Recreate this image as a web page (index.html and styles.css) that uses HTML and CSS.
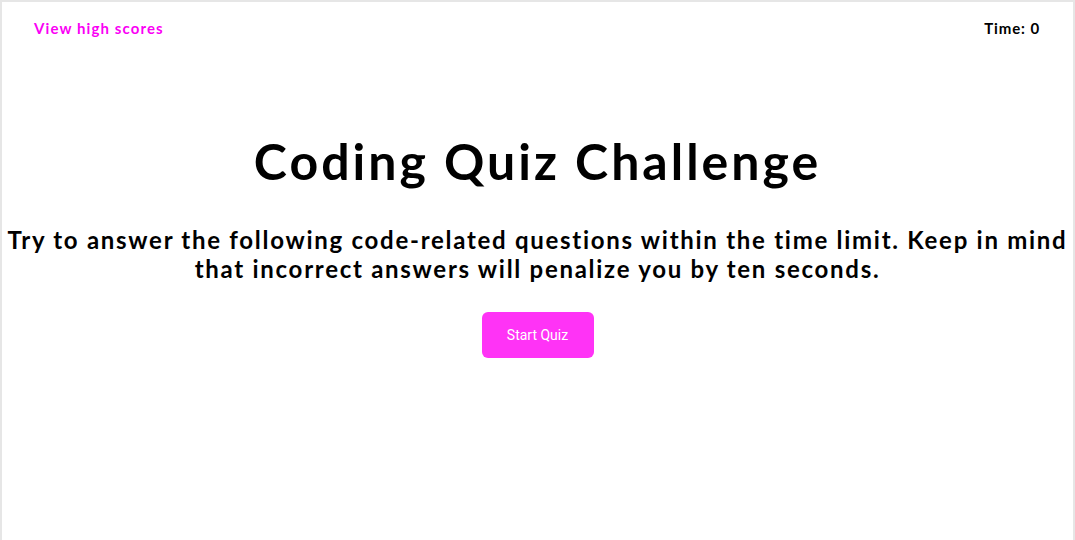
FILE: index.html
```html
<!DOCTYPE html>
<html lang="en">
<head>
<meta charset="utf-8">
<title>Coding Quiz</title>
<link rel="stylesheet" href="styles.css">
</head>
<body>
<div class="frame">
  <header class="topbar">
    <a class="scores" href="#">View high scores</a>
    <div class="timer">Time: <span>0</span></div>
  </header>
  <main class="intro">
    <h1 class="title">Coding Quiz Challenge</h1>
    <p class="lead">Try to answer the following code-related questions within the time limit. Keep in mind that incorrect answers will penalize you by ten seconds.</p>
    <button class="start" type="button">Start Quiz</button>
  </main>
</div>
</body>
</html>
```
FILE: styles.css
```css
html, body {
  margin: 0;
  padding: 0;
  background: #fff;
}
.frame {
  box-sizing: border-box;
  height: 540px;
  border: 2px solid #e6e6e6;
  border-bottom: none;
  font-family: "Lato", "Liberation Sans", sans-serif;
  color: #000;
}
.topbar {
  display: flex;
  justify-content: space-between;
  align-items: center;
  padding: 17px 33px 0 32px;
  font-weight: 700;
  font-size: 15px;
  line-height: 18px;
  letter-spacing: 1.1px;
}
.scores {
  color: #fa00f5;
  text-decoration: none;
}
.timer {
  color: #000;
  letter-spacing: 0.9px;
}
.intro {
  display: flex;
  flex-direction: column;
  align-items: center;
  text-align: center;
}
.title {
  margin: 94px 0 0;
  font-size: 50px;
  line-height: 60px;
  font-weight: 700;
  letter-spacing: 3px;
}
.lead {
  margin: 34px 0 0;
  font-size: 24px;
  line-height: 29px;
  font-weight: 700;
  letter-spacing: 1.72px;
  padding: 0 2px;
}
.start {
  margin-top: 29px;
  width: 112px;
  height: 46px;
  border: none;
  border-radius: 6px;
  background: #ff33f6;
  color: #fff;
  font-family: "Roboto", "Liberation Sans", sans-serif;
  font-size: 14px;
}
```
